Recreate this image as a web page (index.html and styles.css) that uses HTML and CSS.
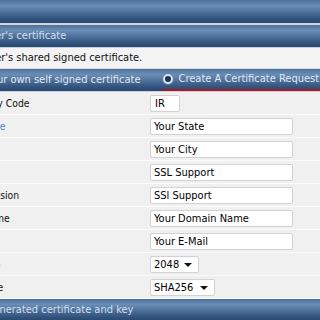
FILE: index.html
```html
<!DOCTYPE html>
<html lang="en">
<head>
    <meta charset="UTF-8">
    <title>SSL Certificate</title>
    <link rel="stylesheet" href="styles.css">
</head>
<body>
    <div class="panel">
        <div class="bar bar-head"></div>
        <div class="bar">Use the server's certificate</div>
        <div class="note">Use the server's shared signed certificate.</div>
        <div class="bar tabs">
            <span class="tab"><span class="radio"></span>Create your own self signed certificate</span>
            <span class="tab active"><span class="radio"></span>Create A Certificate Request</span>
        </div>

        <div class="form">
            <label class="row-label">Country Code</label>
            <div class="field"><input class="input input-xs" type="text" value="IR"></div>

            <label class="row-label link">Province</label>
            <div class="field"><input class="input" type="text" value="Your State"></div>

            <label class="row-label">City</label>
            <div class="field"><input class="input" type="text" value="Your City"></div>

            <label class="row-label">Org</label>
            <div class="field"><input class="input" type="text" value="SSL Support"></div>

            <label class="row-label">Subdivision</label>
            <div class="field"><input class="input" type="text" value="SSl Support"></div>

            <label class="row-label">CN Name</label>
            <div class="field"><input class="input" type="text" value="Your Domain Name"></div>

            <label class="row-label">E-Mail</label>
            <div class="field"><input class="input" type="text" value="Your E-Mail"></div>

            <label class="row-label link">Bit Size</label>
            <div class="field"><span class="select select-sm">2048</span></div>

            <label class="row-label">Scheme</label>
            <div class="field"><span class="select select-md">SHA256</span></div>
        </div>

        <div class="bar bar-upload">Upload a generated certificate and key</div>
    </div>
</body>
</html>
```

FILE: styles.css
```css
/* General */
body {
    margin: 0;
    overflow: hidden;
    background: #f0f0f0;
    font-family: "DejaVu Sans Condensed", "DejaVu Sans", sans-serif;
    font-size: 11px;
}

.panel {
    width: 560px;
    margin-left: -80px;
}

/* Blue header bars */
.bar {
    height: 22px;
    line-height: 22px;
    padding-left: 13px;
    color: #d3dfec;
    white-space: nowrap;
    border-bottom: 1px solid #c9d2dc;
    background: linear-gradient(to bottom, #4d719b 0%, #6a8db5 25%, #4a6e98 55%, #2f5079 85%, #2a4970 100%);
}

.bar-head {
    height: 23px;
    border-bottom: 2px solid #cfd6de;
}

.bar-upload {
    padding-left: 20px;
}

.note {
    height: 20px;
    line-height: 20px;
    padding-left: 13px;
    color: #111;
    background: #f3f3f3;
    border-bottom: 1px solid #dcdcdc;
    white-space: nowrap;
}

/* Tabs */
.tabs {
    display: flex;
    gap: 21px;
}

.tab {
    display: flex;
    align-items: center;
    gap: 6px;
    color: #e2e9f2;
}

.tab.active {
    height: 20px;
    padding-left: 1px;
    border-bottom: 2px solid #a8182a;
    flex: 1;
}

.radio {
    width: 6px;
    height: 6px;
    border-radius: 50%;
    background: #1d3450;
    border: 2px solid #d8e4f0;
    box-shadow: 0 0 0 1px #5f80a6;
}

/* Form rows */
.form {
    display: grid;
    grid-template-columns: 230px 1fr;
}

.row-label,
.field {
    height: 22px;
    display: flex;
    align-items: center;
    background: #f0f0f0;
    border-bottom: 1px solid #fbfbfb;
}

.row-label {
    padding-left: 46px;
    color: #111;
    font-size: 10.3px;
    white-space: nowrap;
}

.row-label.link {
    color: #4a86c0;
}

.input {
    box-sizing: border-box;
    width: 143px;
    height: 17px;
    padding: 0 3px;
    border: 1px solid #d2d2d2;
    border-radius: 2px;
    background: #fff;
    font-family: "DejaVu Sans Condensed", "DejaVu Sans", sans-serif;
    font-size: 11px;
    color: #000;
}

.input-xs {
    width: 30px;
    padding-left: 4px;
}

.select {
    box-sizing: border-box;
    display: flex;
    align-items: center;
    height: 17px;
    padding-left: 3px;
    border: 1px solid #d2d2d2;
    border-radius: 2px;
    background: #fff;
    color: #000;
    position: relative;
}

.select::after {
    content: "";
    position: absolute;
    right: 6px;
    top: 6px;
    border-left: 4px solid transparent;
    border-right: 4px solid transparent;
    border-top: 4px solid #111;
}

.select-sm {
    width: 49px;
}

.select-md {
    width: 65px;
}
```
